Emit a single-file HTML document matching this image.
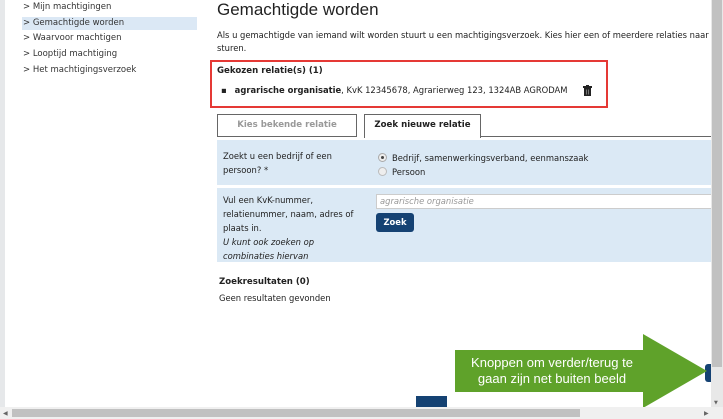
<!DOCTYPE html>
<html><head><meta charset="utf-8"><style>
*{margin:0;padding:0;box-sizing:border-box}
body{width:723px;height:419px;overflow:hidden;background:#fff;font-family:"DejaVu Sans","Liberation Sans",sans-serif;font-size:8.4px;color:#222;position:relative}
.a{position:absolute;white-space:nowrap}
.nav{color:#333;font-size:8.5px}
b{font-weight:bold}
</style></head><body>
<div class="a" style="left:0;top:0;width:5px;height:407px;background:#e6e8ea"></div>
<div class="a" style="left:22px;top:17px;width:175px;height:13px;background:#dbe8f5"></div>
<div class="a nav" style="left:23px;top:2px">&gt; Mijn machtigingen</div>
<div class="a nav" style="left:23px;top:18px">&gt; Gemachtigde worden</div>
<div class="a nav" style="left:23px;top:33px">&gt; Waarvoor machtigen</div>
<div class="a nav" style="left:23px;top:49px">&gt; Looptijd machtiging</div>
<div class="a nav" style="left:23px;top:65px">&gt; Het machtigingsverzoek</div>

<div class="a" style="left:217px;top:0px;font-family:'Liberation Sans',sans-serif;font-size:17px;color:#222">Gemachtigde worden</div>
<div class="a" style="left:217px;top:29px;font-size:8.4px;line-height:13px">Als u gemachtigde van iemand wilt worden stuurt u een machtigingsverzoek. Kies hier een of meerdere relaties naar<br>sturen.</div>

<div class="a" style="left:210px;top:60px;width:398px;height:48px;border:2px solid #e53935"></div>
<div class="a" style="left:217px;top:66px;font-weight:bold;font-size:8.6px">Gekozen relatie(s) (1)</div>
<div class="a" style="left:221px;top:85px;font-size:8.4px">▪&nbsp;&nbsp;&nbsp;<b>agrarische organisatie</b>, KvK 12345678, Agrarierweg 123, 1324AB AGRODAM</div>
<svg class="a" style="left:583px;top:85px" width="9" height="11" viewBox="0 0 9 11"><rect x="0" y="1" width="9" height="2" fill="#222"/><rect x="3" y="0" width="3" height="1" fill="#222"/><rect x="1" y="3" width="7" height="8" fill="#222"/><rect x="3" y="4.5" width=".8" height="5" fill="#888"/><rect x="5.2" y="4.5" width=".8" height="5" fill="#888"/></svg>

<div class="a" style="left:480px;top:136px;width:231px;height:1px;background:#666"></div>
<div class="a" style="left:217px;top:114px;width:140px;height:23px;border:1px solid #666;text-align:center;line-height:21px;font-weight:bold;color:#999;font-size:8.6px">Kies bekende relatie</div>
<div class="a" style="left:364px;top:114px;width:117px;height:24px;border:1px solid #666;border-bottom:none;background:#fff;text-align:center;line-height:21px;font-weight:bold;font-size:8.6px">Zoek nieuwe relatie</div>

<div class="a" style="left:217px;top:140px;width:494px;height:45px;background:#dbe9f5"></div>
<div class="a" style="left:217px;top:188px;width:494px;height:74px;background:#dbe9f5"></div>
<div class="a" style="left:223px;top:149px;line-height:14px">Zoekt u een bedrijf of een<br>persoon? *</div>
<div class="a" style="left:378px;top:153px;width:9px;height:9px;border-radius:50%;border:1px solid #aaa;background:#eee"></div>
<div class="a" style="left:381px;top:156px;width:3px;height:3px;border-radius:50%;background:#444"></div>
<div class="a" style="left:378px;top:167px;width:9px;height:9px;border-radius:50%;border:1px solid #bbb;background:#eee"></div>
<div class="a" style="left:392px;top:151px;line-height:14px">Bedrijf, samenwerkingsverband, eenmanszaak<br>Persoon</div>
<div class="a" style="left:223px;top:193px;line-height:14px">Vul een KvK-nummer,<br>relatienummer, naam, adres of<br>plaats in.<br><i>U kunt ook zoeken op<br>combinaties hiervan</i></div>
<div class="a" style="left:376px;top:194px;width:335px;height:15px;background:#fff;border:1px solid #ccc;border-right:none;color:#999;font-style:italic;padding-left:3px;line-height:13px">agrarische organisatie</div>
<div class="a" style="left:376px;top:213px;width:38px;height:19px;background:#154273;border-radius:3px;color:#fff;font-weight:bold;text-align:center;line-height:18px">Zoek</div>

<div class="a" style="left:219px;top:277px;font-weight:bold;font-size:8.6px">Zoekresultaten (0)</div>
<div class="a" style="left:219px;top:293px">Geen resultaten gevonden</div>

<div class="a" style="left:416px;top:396px;width:31px;height:11px;background:#154273"></div>
<div class="a" style="left:705px;top:364px;width:6px;height:18px;background:#154273;border-radius:3px 0 0 3px"></div>
<svg class="a" style="left:455px;top:334px" width="254" height="76" viewBox="0 0 254 76"><polygon points="0,16 188,16 188,0 252,37 188,74 188,58 0,58" fill="#5fa22a"/></svg>
<div class="a" style="left:457px;top:355px;width:190px;text-align:center;color:#fff;font-family:'Liberation Sans',sans-serif;font-size:13px;line-height:16px">Knoppen om verder/terug te<br>gaan zijn net buiten beeld</div>

<div class="a" style="left:711px;top:0;width:12px;height:407px;background:#e8e8e8"></div>
<div class="a" style="left:712px;top:0;width:10px;height:367px;background:#c1c1c1"></div>
<div class="a" style="left:0;top:407px;width:723px;height:12px;background:#f0f0f0"></div>
<div class="a" style="left:12px;top:409px;width:568px;height:8px;background:#c1c1c1"></div>
<div class="a" style="left:3px;top:410px;font-size:6px;color:#666">◀</div>
<div class="a" style="left:704px;top:410px;font-size:6px;color:#666">▶</div>
<div class="a" style="left:714px;top:400px;font-size:5px;color:#666">▼</div>
</body></html>
